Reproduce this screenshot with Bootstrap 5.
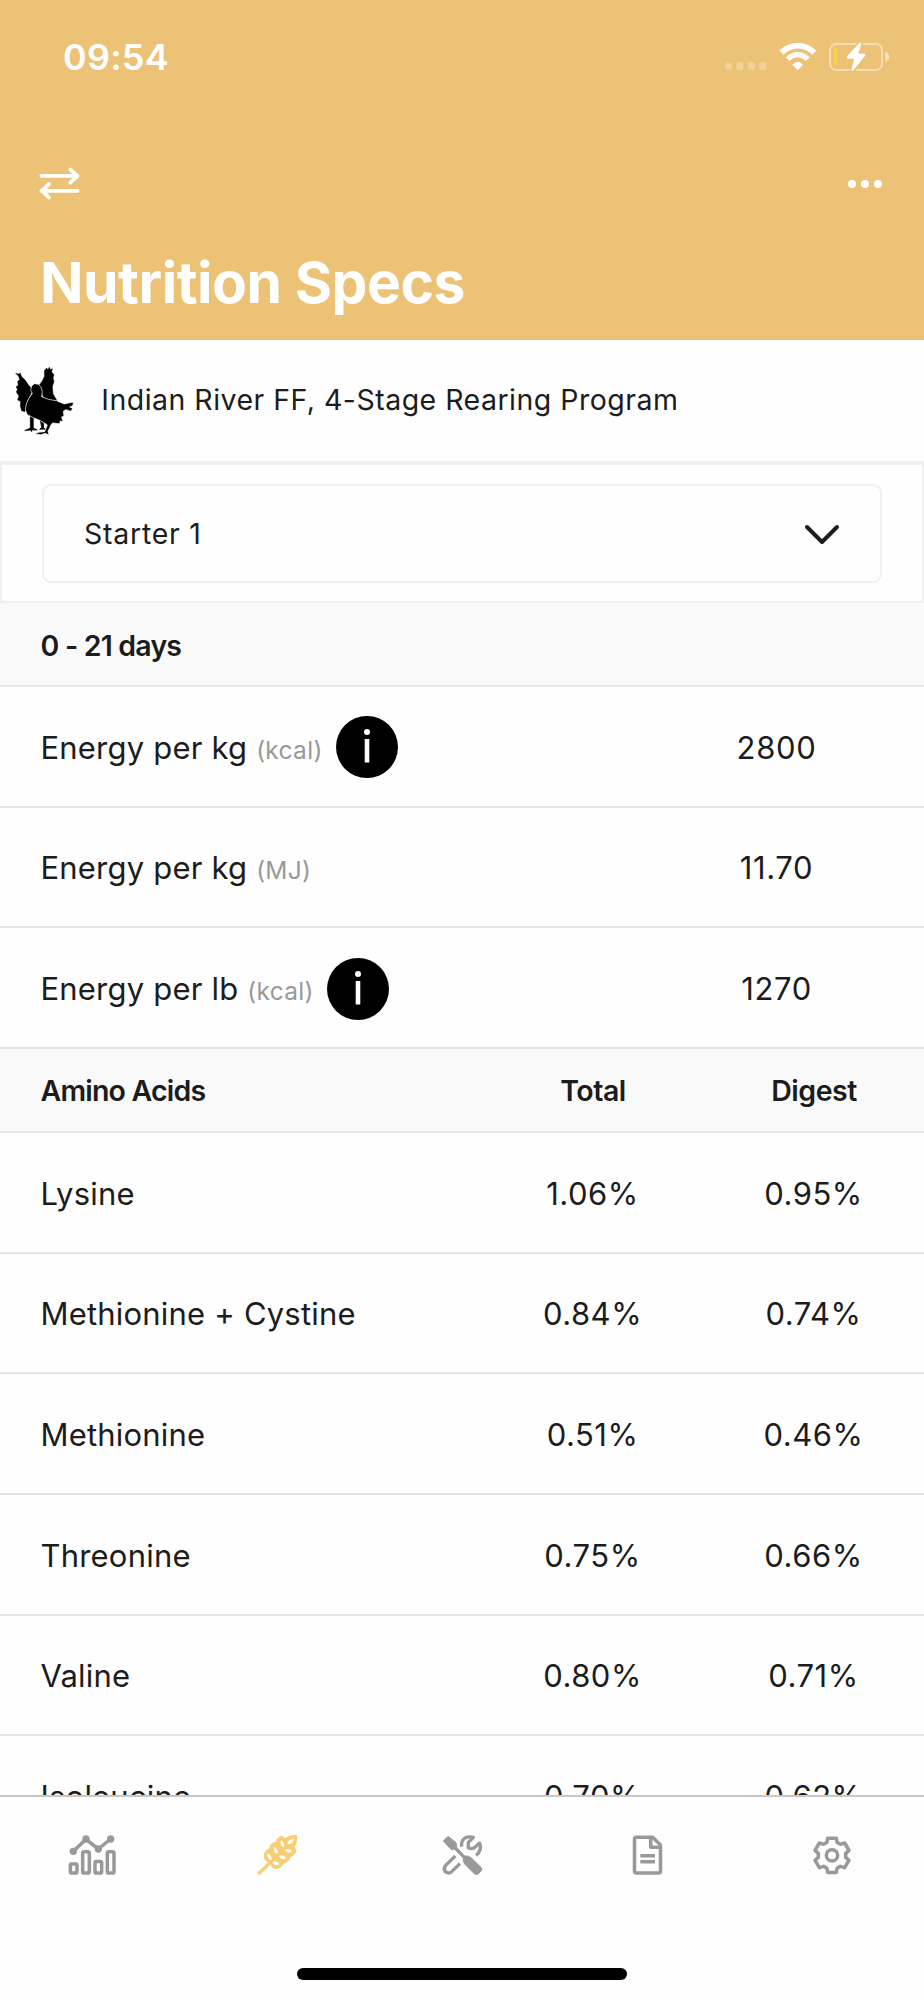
<!DOCTYPE html>
<html lang="en">
<head>
<meta charset="utf-8">
<meta name="viewport" content="width=device-width, initial-scale=1">
<title>Nutrition Specs</title>
<link href="https://cdn.jsdelivr.net/npm/bootstrap@5.3.0/dist/css/bootstrap.min.css" rel="stylesheet">
<style>
  body { font-family: Inter, "Liberation Sans", sans-serif; color: #1c1c1c; background: #fefefe; font-size: 31px; letter-spacing: .2px; line-height: 1.2; }
  svg { display: block; flex: none; }
  .screen { height: 2000px; }
  .app-head { background: #ebc276; height: 340px; }
  .status { height: 114px; padding: 0 33px 0 63px; }
  .clock { font-size: 36px; font-weight: 600; letter-spacing: .2px; padding-top: 1px; }
  .tools-row { height: 139px; padding: 0 42px 0 37px; }
  .page-title { font-size: 57px; font-weight: 700; line-height: 60px; letter-spacing: -.45px; padding-left: 40px; margin: 0; }
  .program { height: 121px; font-size: 28.5px; letter-spacing: .48px; padding-left: 13px; gap: 25px; }
  .picker { height: 142px; border: 2px solid #f0f0f0; border-top-width: 4px; padding: 19px 40px 0; }
  .picker-box { height: 99px; border: 2px solid #f0f0f0; border-radius: 9px; padding: 2px 40px 0; font-size: 28.5px; letter-spacing: .75px; }
  .spec { height: 120.6px; border-bottom: 2px solid #e4e4e4; padding-top: 2px; }
  .group { height: 84.2px; border-bottom: 2px solid #e9e9e9; background: #f9f9f9; font-weight: 600; font-size: 28.5px; letter-spacing: -.8px; padding-top: 3px; }
  .c-name { padding-left: 40.5px; }
  .c-val { width: 221px; text-align: center; letter-spacing: .5px; }
  .c-wide { width: 295px; text-align: center; letter-spacing: .65px; }
  .group .c-val { letter-spacing: -.5px; padding-left: 1px; }
  .unit { font-size: 24.5px; letter-spacing: .3px; color: #999; }
  .info { width: 62px; height: 62px; margin-left: 13.5px; }
  .tabs { height: 205px; border-top: 2px solid #c8c8c8; background: #fefefe; color: #999; }
  .tabs .on { color: #f8ce74; }
  .tab-icons { padding-top: 36px; }
  .home-bar { width: 330px; height: 12px; border-radius: 6px; background: #000; margin-bottom: 20px; }
</style>
</head>
<body>
<div class="screen d-flex flex-column overflow-hidden">
  <header class="app-head text-white flex-shrink-0">
    <div class="status d-flex justify-content-between align-items-center">
      <span class="clock">09:54</span>
      <svg width="168" height="33.3" viewBox="128 60 504 100">
        <g fill="#fff" fill-opacity=".25"><rect x="133" y="127" width="22" height="23" rx="7"/><rect x="167" y="127" width="22" height="23" rx="7"/><rect x="202" y="127" width="22" height="23" rx="7"/><rect x="236" y="127" width="22" height="23" rx="7"/></g>
        <g fill="none" stroke="#fff"><path stroke-width="17" d="M303 98Q325 77 352 77Q380 77 402 98"/><path stroke-width="16" d="M322 118Q335 104 352 104Q369 104 382 118"/></g>
        <path fill="#fff" d="M352 151L336 134Q352 117 368 134Z"/>
        <rect x="449.500" y="72" width="156" height="78" rx="19" fill="none" stroke="#fff" stroke-opacity=".45" stroke-width="6"/>
        <path fill="#fff" fill-opacity=".5" d="M615 95Q627 99 627 110.500T615 126Z"/>
        <rect x="460" y="85" width="10.500" height="50" rx="4" fill="#f5d747"/>
        <path fill="#fff" stroke="#ebc276" stroke-width="10" paint-order="stroke" stroke-linejoin="round" d="M537 69Q543 66 543 72L534 101H553Q558 103 554 108L520 150Q514 156 513 149L522 116H502Q497 113 501 108Z"/>
      </svg>
    </div>
    <div class="tools-row d-flex justify-content-between align-items-center">
      <svg width="45.300" height="36.700" viewBox="110 495 136 110" fill="none" stroke="#fff" stroke-width="11.500" stroke-linecap="round" stroke-linejoin="round"><path d="M123 527.500H230M123 572.500H232"/><path d="M210 508.500L231.500 528L210 548M146 552L125 572L146 592.500"/></svg>
      <svg width="34" height="10" viewBox="0 0 34 10" fill="#fff"><circle cx="4" cy="5" r="4"/><circle cx="17" cy="5" r="4"/><circle cx="30" cy="5" r="4"/></svg>
    </div>
    <h1 class="page-title">Nutrition Specs</h1>
  </header>

  <div class="program d-flex align-items-center flex-shrink-0">
    <svg width="63.300" height="73.300" viewBox="40 70 190 220">
      <path fill="#000" stroke="#000" stroke-width="1.500" d="M48 98L60 101L61 96L66 108L77 119L87 134L94 141L98 150L82 184L76 213L66 210L62 196L63 182L54 178L58 166L50 154L54 146L49 139L56 134L54 122L60 117L57 107ZM119 133L128 121L135 106L134 90L141 82L145 87L149 80L152 87L158 84L156 94L163 102L160 112L163 122L158 138L160 160L172 180L150 177L131 170L125 150Z"/>
      <path fill="#000" stroke="#000" stroke-width="2" d="M92 218L101 222L101 262L113 268L96 268L96 273L92 268L75 270L92 262ZM122 240L132 246L132 262L138 266L120 266L126 260Z"/>
      <path fill="#000" stroke="#fefefe" stroke-width="2" d="M93 149L96 136L104 129L116 131L124 139L128 153L126 168L146 176L170 180L194 190L206 187L222 185L219 195L210 199L219 203L214 212L198 207L191 212L193 226L186 229L190 243L181 241L181 249L168 248L159 247L154 252L150 262L145 271L148 284L138 278L123 282L106 280L117 275L135 273L143 253L133 246L118 238L101 231L83 222L77 207L80 190L87 174L98 158Z"/>
    </svg>
    <span>Indian River FF, 4-Stage Rearing Program</span>
  </div>

  <div class="picker flex-shrink-0">
    <div class="picker-box d-flex justify-content-between align-items-center">
      <span>Starter 1</span>
      <svg width="36" height="22" viewBox="0 0 36 22" fill="none" stroke="#1c1c1c" stroke-width="4" stroke-linecap="round" stroke-linejoin="round"><path d="M3 3L18 18L33 3"/></svg>
    </div>
  </div>

  <div class="group d-flex align-items-center flex-shrink-0"><div class="c-name">0 - 21 days</div></div>
  <div class="spec d-flex align-items-center flex-shrink-0">
    <div class="c-name flex-grow-1 d-flex align-items-center"><span>Energy per kg <span class="unit">(kcal)</span></span>
      <svg class="info" viewBox="0 0 62 62"><circle cx="31" cy="31" r="31"/><circle cx="31" cy="16" r="3" fill="#fff"/><path d="M31 23V46.500" stroke="#fff" stroke-width="4.600"/></svg></div>
    <div class="c-wide">2800</div>
  </div>
  <div class="spec d-flex align-items-center flex-shrink-0">
    <div class="c-name flex-grow-1">Energy per kg <span class="unit">(MJ)</span></div>
    <div class="c-wide">11.70</div>
  </div>
  <div class="spec d-flex align-items-center flex-shrink-0">
    <div class="c-name flex-grow-1 d-flex align-items-center"><span>Energy per lb <span class="unit">(kcal)</span></span>
      <svg class="info" viewBox="0 0 62 62"><circle cx="31" cy="31" r="31"/><circle cx="31" cy="16" r="3" fill="#fff"/><path d="M31 23V46.500" stroke="#fff" stroke-width="4.600"/></svg></div>
    <div class="c-wide">1270</div>
  </div>
  <div class="group d-flex align-items-center flex-shrink-0">
    <div class="c-name flex-grow-1">Amino Acids</div><div class="c-val">Total</div><div class="c-val">Digest</div>
  </div>
  <div class="flex-grow-1 overflow-hidden" style="min-height:0">
    <div class="spec d-flex align-items-center"><div class="c-name flex-grow-1">Lysine</div><div class="c-val">1.06%</div><div class="c-val">0.95%</div></div>
    <div class="spec d-flex align-items-center"><div class="c-name flex-grow-1">Methionine + Cystine</div><div class="c-val">0.84%</div><div class="c-val">0.74%</div></div>
    <div class="spec d-flex align-items-center"><div class="c-name flex-grow-1">Methionine</div><div class="c-val">0.51%</div><div class="c-val">0.46%</div></div>
    <div class="spec d-flex align-items-center"><div class="c-name flex-grow-1">Threonine</div><div class="c-val">0.75%</div><div class="c-val">0.66%</div></div>
    <div class="spec d-flex align-items-center"><div class="c-name flex-grow-1">Valine</div><div class="c-val">0.80%</div><div class="c-val">0.71%</div></div>
    <div class="spec d-flex align-items-center"><div class="c-name flex-grow-1">Isoleucine</div><div class="c-val">0.70%</div><div class="c-val">0.62%</div></div>
  </div>

  <nav class="tabs d-flex flex-column justify-content-between align-items-center flex-shrink-0">
    <div class="tab-icons d-flex w-100">
      <a class="flex-fill d-flex justify-content-center text-reset"><svg width="50" height="44" viewBox="82 160 150 132" fill="none" stroke="currentColor" stroke-width="10.500" stroke-linejoin="round"><rect x="92" y="253" width="20" height="27" rx="4"/><rect x="129" y="216" width="20" height="64" rx="4"/><rect x="166" y="245.500" width="20" height="34.500" rx="4"/><rect x="203" y="216" width="20" height="64" rx="4"/><path d="M101 215L139 179L176 208L213 178"/><g fill="currentColor" stroke="none"><circle cx="101" cy="215" r="11"/><circle cx="139" cy="178" r="11"/><circle cx="176" cy="208" r="11"/><circle cx="213" cy="178" r="11"/></g></svg></a>
      <a class="on flex-fill d-flex justify-content-center"><svg width="50" height="44" viewBox="637 160 150 132"><path d="M659 280L694 246" stroke="currentColor" stroke-width="10" stroke-linecap="round"/><path fill="currentColor" d="M725 168Q732 170 737 175Q748 166 769 166Q773 167 773 171Q773 190 765 203L771 213Q764 229 752 233Q750 247 733 251Q723 268 709 268Q694 267 690 250Q674 246 672 230Q673 214 689 206Q690 190 708 187Q711 174 725 168Z"/><g fill="#fefefe"><path d="M684 220Q698 228 695 241Q681 238 684 220Z"/><path d="M703 201Q717 209 714 222Q700 219 703 201Z"/><path d="M724 181Q736 190 733 203Q719 199 724 181Z"/><path d="M698 248Q710 240 720 253Q707 263 698 248Z"/><path d="M717 230Q730 222 739 235Q726 244 717 230Z"/><path d="M736 211Q749 203 758 215Q745 225 736 211Z"/><path d="M743 194Q743 179 763 177Q761 194 743 194Z"/></g></svg></a>
      <a class="flex-fill d-flex justify-content-center text-reset"><svg width="50" height="44" viewBox="51 160 150 132"><path fill="currentColor" stroke="currentColor" stroke-width="3" stroke-linejoin="round" d="M84 170L107 188Q110 192 110 203L134 229Q147 228 153 234L184 264Q187 269 184 273L174 283Q169 286 164 283L134 253Q128 246 130 235L104 209H93L70 184Z"/><path fill="none" stroke="currentColor" stroke-width="10" stroke-linejoin="round" d="M125 201Q122 181 139 173Q147 170 160 173L145 188V204Q151 209 162 205L179 190Q187 213 168 227M106 229L77 257Q69 267 76 276Q86 284 95 276L120 252"/></svg></a>
      <a class="flex-fill d-flex justify-content-center text-reset"><svg width="50" height="44" viewBox="605 160 150 132" fill="none" stroke="currentColor" stroke-width="10.500" stroke-linejoin="round"><path d="M648 173H697L720.500 196V274Q720.500 280 715 280H648Q642.500 280 642.500 274V179Q642.500 173 648 173Z"/><path d="M691 173V203H720M660 228H704M660 246.500H704"/></svg></a>
      <a class="flex-fill d-flex justify-content-center text-reset"><svg width="50" height="44" viewBox="-75 -67 150 132" fill="none" stroke="currentColor" stroke-width="10.500" stroke-linejoin="round"><path d="M-15 -39L-13 -51.500H13L15 -39L25 -33L38 -37L51 -15L41 -6V6L51 15L38 37L25 33L15 39L13 51.500H-13L-15 39L-25 33L-38 37L-51 15L-41 6V-6L-51 -15L-38 -37L-25 -33Z"/><circle r="17"/></svg></a>
    </div>
    <div class="home-bar"></div>
  </nav>
</div>
<script src="https://cdn.jsdelivr.net/npm/bootstrap@5.3.0/dist/js/bootstrap.bundle.min.js"></script>
</body>
</html>
